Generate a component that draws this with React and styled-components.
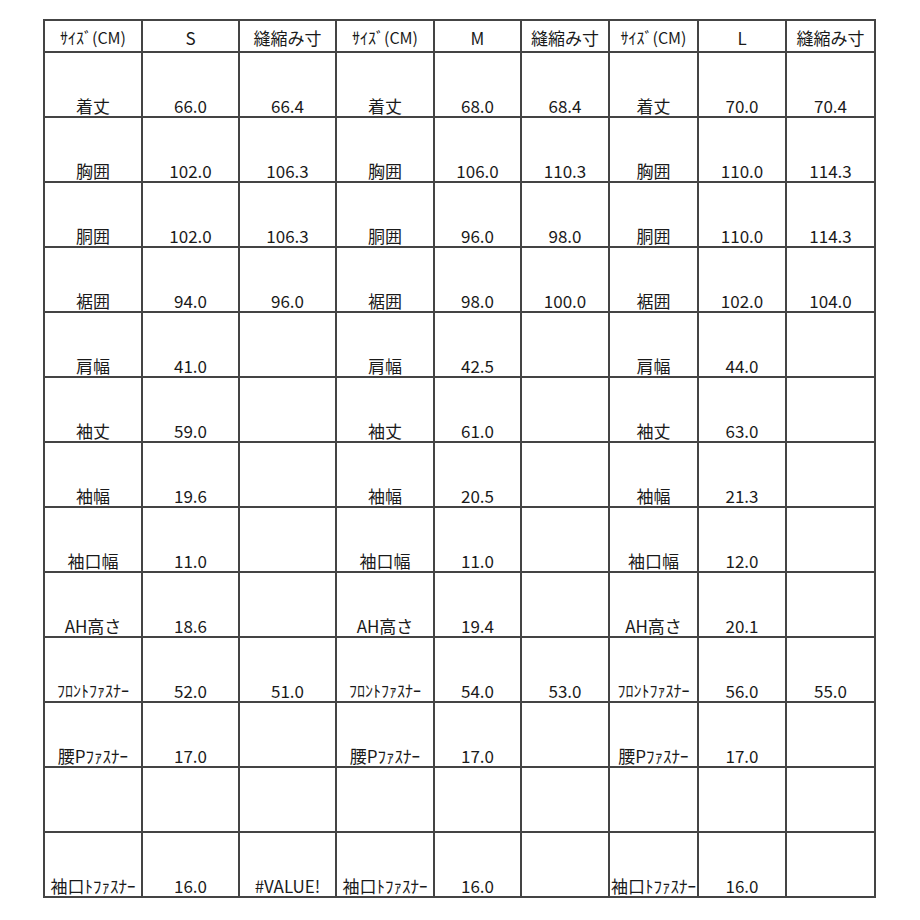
import styled, { createGlobalStyle } from "styled-components";

const GlobalStyle = createGlobalStyle`
  html, body {
    margin: 0;
    padding: 0;
    background: #ffffff;
  }
  body {
    font-family: "Noto Sans CJK JP", "Noto Sans", sans-serif;
    color: #1a1a1a;
  }
`;

const Page = styled.div`
  width: 920px;
  height: 920px;
  padding: 19px 0 0 43px;
  box-sizing: border-box;
`;

const Sheet = styled.table`
  border-collapse: collapse;
  table-layout: fixed;
  width: 833px;
  font-size: 17px;
  line-height: 17px;
`;

const HeadRow = styled.tr`
  height: 32px;
`;

const Row = styled.tr`
  height: 65px;
`;

const Cell = styled.td`
  border: 2px solid #444444;
  padding: 0 0 ${(p) => (p.$head ? "5px" : "2px")};
  text-align: center;
  vertical-align: bottom;
  white-space: nowrap;
  overflow: visible;
  font-size: ${(p) => p.$size || 17}px;
  box-sizing: border-box;
`;

const widths = [98, 97, 97, 98, 87, 88, 89, 88, 89];

const sizes = ["S", "M", "L"];

const rows = [
  ["着丈", ["66.0", "66.4"], ["68.0", "68.4"], ["70.0", "70.4"]],
  ["胸囲", ["102.0", "106.3"], ["106.0", "110.3"], ["110.0", "114.3"]],
  ["胴囲", ["102.0", "106.3"], ["96.0", "98.0"], ["110.0", "114.3"]],
  ["裾囲", ["94.0", "96.0"], ["98.0", "100.0"], ["102.0", "104.0"]],
  ["肩幅", ["41.0", ""], ["42.5", ""], ["44.0", ""]],
  ["袖丈", ["59.0", ""], ["61.0", ""], ["63.0", ""]],
  ["袖幅", ["19.6", ""], ["20.5", ""], ["21.3", ""]],
  ["袖口幅", ["11.0", ""], ["11.0", ""], ["12.0", ""]],
  ["AH高さ", ["18.6", ""], ["19.4", ""], ["20.1", ""]],
  ["ﾌﾛﾝﾄﾌｧｽﾅｰ", ["52.0", "51.0"], ["54.0", "53.0"], ["56.0", "55.0"]],
  ["腰Pﾌｧｽﾅｰ", ["17.0", ""], ["17.0", ""], ["17.0", ""]],
  [null, ["", ""], ["", ""], ["", ""]],
  ["袖口ﾄﾌｧｽﾅｰ", ["16.0", "#VALUE!"], ["16.0", ""], ["16.0", ""]],
];

const labelSize = (label) => (label && label.startsWith("ﾌﾛﾝﾄ") ? 16 : 17);

export default function App() {
  return (
    <Page>
      <GlobalStyle />
      <Sheet>
        <colgroup>
          {widths.map((w, i) => (
            <col key={i} style={{ width: w }} />
          ))}
        </colgroup>
        <tbody>
          <HeadRow>
            {sizes.map((s) => [
              <Cell $head $size={16} key={s + "a"}>
                ｻｲｽﾞ(CM)
              </Cell>,
              <Cell $head key={s + "b"}>
                {s}
              </Cell>,
              <Cell $head key={s + "c"}>
                縫縮み寸
              </Cell>,
            ])}
          </HeadRow>
          {rows.map(([label, ...groups], r) => (
            <Row key={r}>
              {groups.map((g, i) => [
                <Cell $size={labelSize(label)} key={i + "l"}>
                  {label || ""}
                </Cell>,
                <Cell key={i + "v"}>{g[0]}</Cell>,
                <Cell key={i + "s"}>{g[1]}</Cell>,
              ])}
            </Row>
          ))}
        </tbody>
      </Sheet>
    </Page>
  );
}
